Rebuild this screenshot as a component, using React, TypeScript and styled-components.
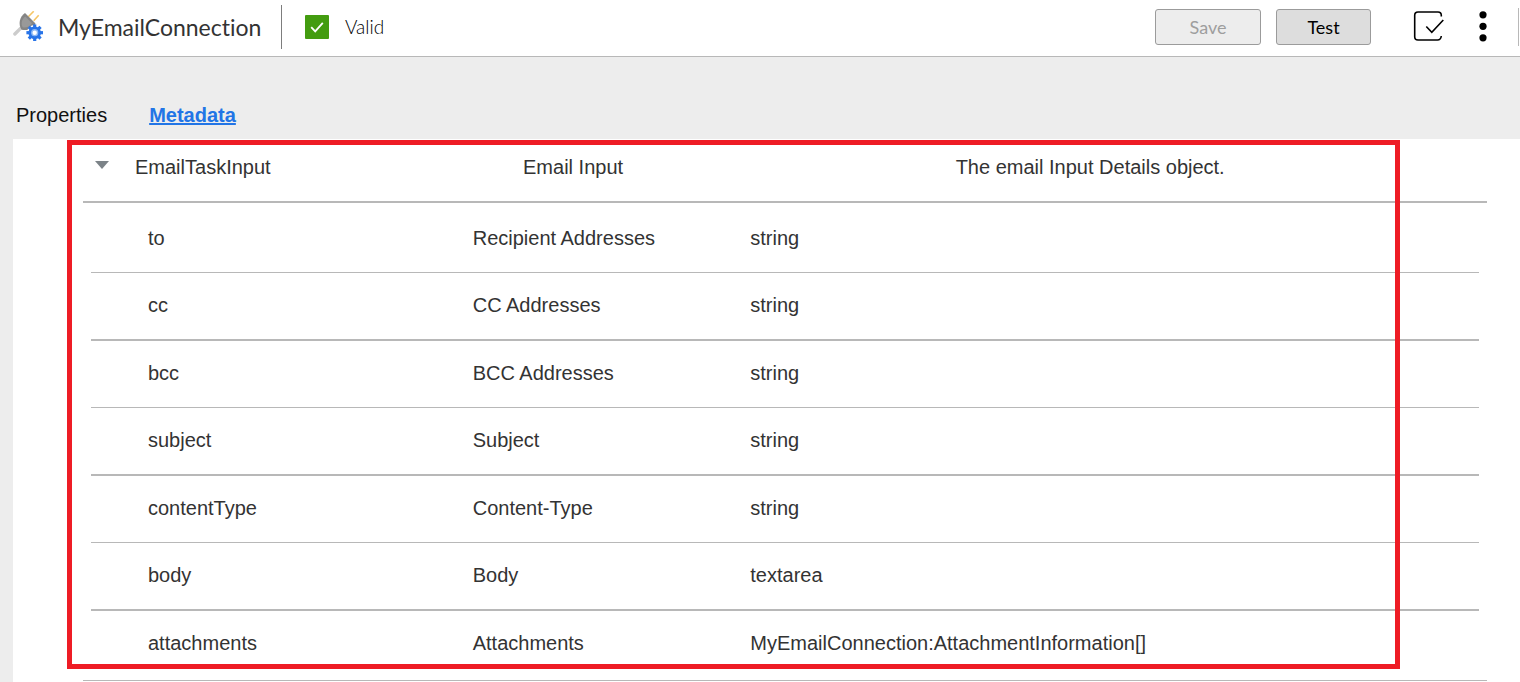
import React, { useState } from "react";
import styled, { createGlobalStyle } from "styled-components";

const GlobalStyle = createGlobalStyle`
  *, *::before, *::after { box-sizing: border-box; }
  body {
    margin: 0;
    background: #ededed;
    color: #333333;
    font-family: "Liberation Sans", Arial, sans-serif;
    font-size: 20px;
    line-height: 26px;
  }
`;

const Page = styled.div`
  display: flex;
  flex-direction: column;
  min-height: 100vh;
`;

const Header = styled.header`
  display: flex;
  align-items: center;
  height: 57px;
  padding: 0 1px 3px 13px;
  background: #ffffff;
  border-bottom: 1px solid #b8b8b8;
  font-family: Lato, "Liberation Sans", sans-serif;
  font-variant-ligatures: none;
`;

const Title = styled.h1`
  margin: 0 0 0 14px;
  font-size: 23px;
  line-height: 28px;
  font-weight: 400;
`;

const Divider = styled.span<{ $height: number; $color: string }>`
  width: 1px;
  height: ${(p) => p.$height}px;
  background: ${(p) => p.$color};
`;

const Status = styled.div`
  display: flex;
  align-items: center;
  gap: 16px;
  margin-left: 23px;
  font-size: 19px;
  font-weight: 300;
  color: #000000;
`;

const TitleGroup = styled.div`
  display: flex;
  align-items: center;
  min-width: 268px;
`;

const Actions = styled.div`
  display: flex;
  align-items: center;
  gap: 15px;
  margin-left: auto;
`;

const ActionButton = styled.button<{ $width: number }>`
  width: ${(p) => p.$width}px;
  height: 36px;
  padding: 0;
  border: 1px solid #9b9b9b;
  border-radius: 3px;
  background: #dddddd;
  color: #000000;
  font: inherit;
  font-size: 18px;
  &:disabled {
    background: #ededed;
    color: #9e9e9e;
  }
`;

const IconButton = styled.button`
  display: flex;
  align-items: center;
  justify-content: center;
  width: 32px;
  height: 36px;
  padding: 0;
  border: 0;
  background: none;
  color: #000000;
`;

const IconGroup = styled.div`
  display: flex;
  align-items: center;
  gap: 22px;
  margin: 0 4px 0 27px;
`;

const Tabs = styled.nav`
  display: flex;
  gap: 42px;
  padding: 45px 16px 11px;
`;

const Tab = styled.a<{ $active?: boolean }>`
  color: ${(p) => (p.$active ? "#2275e6" : "#111111")};
  font-weight: ${(p) => (p.$active ? 700 : 400)};
  text-decoration: ${(p) => (p.$active ? "underline" : "none")};
`;

const Panel = styled.main`
  flex: 1;
  margin-left: 13px;
  background: #ffffff;
`;

const MetadataObject = styled.section`
  position: relative;
  padding: 0 33px 0 70px;
`;

const Highlight = styled.div`
  position: absolute;
  inset: 1px 120px 12px 54px;
  border: 5px solid #ee1c25;
  pointer-events: none;
`;

const ObjectRow = styled.div`
  display: grid;
  grid-template-columns: 52px 287fr 320fr 393fr;
  padding: 15px 0 21px;
  border-bottom: 2px solid #b8b8b8;
`;

const Toggle = styled.button<{ $open: boolean }>`
  display: flex;
  align-items: center;
  width: 38px;
  height: 22px;
  padding: 0 0 0 12px;
  border: 0;
  background: none;
  svg {
    transform: ${(p) => (p.$open ? "none" : "rotate(-90deg)")};
  }
`;

const FieldArea = styled.div`
  padding: 3px 8px;
  border-bottom: 1px solid #b8b8b8;
`;

const FieldTable = styled.table`
  width: 100%;
  table-layout: fixed;
  border-spacing: 0;
`;

const FieldRow = styled.tr`
  td {
    padding: 19px 0 21px;
    border-bottom: 1px solid #b8b8b8;
  }
  td:first-child {
    padding-left: 57px;
  }
  &:nth-child(even) td {
    border-bottom-width: 2px;
  }
  &:last-child td {
    border-bottom: 0;
  }
`;

const NameCol = styled.col`
  width: 27.5%;
`;

const LabelCol = styled.col`
  width: 20%;
`;

const fields = [
  ["to", "Recipient Addresses", "string"],
  ["cc", "CC Addresses", "string"],
  ["bcc", "BCC Addresses", "string"],
  ["subject", "Subject", "string"],
  ["contentType", "Content-Type", "string"],
  ["body", "Body", "textarea"],
  ["attachments", "Attachments", "MyEmailConnection:AttachmentInformation[]"],
];

const gearTeeth = [0, 45, 90, 135, 180, 225, 270, 315];

function ConnectionIcon() {
  return (
    <svg width="31" height="31" viewBox="0 0 31 31" aria-hidden="true">
      <path d="M1.9 23 8.5 16.4" stroke="#cccccc" strokeWidth="3.4" strokeLinecap="round" />
      <path d="M15.3 5.7 20.7 .3M20.7 9.7 25.7 4.3" stroke="#f5c565" strokeWidth="1.6" />
      <path d="M12 2 22.5 12.5C20.5 17.5 15 20 8.5 18.8 4.8 13 6.8 5.5 12 2Z" fill="#858585" />
      <path d="M12.3 5.5 19 12.2C16.5 15.8 13 17 9.6 16.2 7.6 12.2 9 8 12.3 5.5Z" fill="#999999" />
      <circle cx="21.7" cy="21.7" r="7.6" fill="#ffffff" />
      <g fill="#2874e8">
        {gearTeeth.map((angle) => (
          <rect
            key={angle}
            x="20.1"
            y="13.4"
            width="3.2"
            height="4"
            transform={`rotate(${angle} 21.7 21.7)`}
          />
        ))}
        <circle cx="21.7" cy="21.7" r="6.3" />
      </g>
      <circle cx="21.7" cy="21.7" r="2.9" fill="#ffffff" stroke="#8db8f5" strokeWidth="1.4" />
    </svg>
  );
}

function ValidIcon() {
  return (
    <svg width="24" height="24" viewBox="0 0 24 24" aria-hidden="true">
      <rect width="24" height="24" rx="1" fill="#439c10" />
      <path d="m6.2 12.2 4 4.2 7.6-8.6" fill="none" stroke="#ffffff" strokeWidth="1.8" />
    </svg>
  );
}

function ValidateIcon() {
  return (
    <svg width="32" height="32" viewBox="0 0 32 32" fill="none" stroke="currentColor" aria-hidden="true">
      <path
        d="M28.3 5.5V4.3Q28.3 1 25 1H5Q1.7 1 1.7 4.3v21.4Q1.7 29 5 29h19.5q3.3 0 3.8-4"
        strokeWidth="1.6"
      />
      <path d="m13.3 15.5 5.5 5.8L30.3 9" strokeWidth="1.6" />
    </svg>
  );
}

function MoreIcon() {
  return (
    <svg width="8" height="32" viewBox="0 0 8 32" aria-hidden="true">
      <circle cx="4" cy="3.8" r="3.6" />
      <circle cx="4" cy="15.3" r="3.6" />
      <circle cx="4" cy="26.8" r="3.6" />
    </svg>
  );
}

export default function App() {
  const [open, setOpen] = useState(true);
  return (
    <Page>
      <GlobalStyle />
      <Header>
        <TitleGroup>
          <ConnectionIcon />
          <Title>MyEmailConnection</Title>
        </TitleGroup>
        <Divider $height={44} $color="#7d7d7d" />
        <Status>
          <ValidIcon />
          <span>Valid</span>
        </Status>
        <Actions>
          <ActionButton $width={106} disabled>Save</ActionButton>
          <ActionButton $width={95}>Test</ActionButton>
          <IconGroup>
            <IconButton aria-label="Validate"><ValidateIcon /></IconButton>
            <IconButton aria-label="More actions"><MoreIcon /></IconButton>
          </IconGroup>
          <Divider $height={38} $color="#b8b8b8" />
        </Actions>
      </Header>
      <Tabs>
        <Tab href="#properties">Properties</Tab>
        <Tab href="#metadata" $active aria-current="page">Metadata</Tab>
      </Tabs>
      <Panel>
        <MetadataObject>
          <ObjectRow>
            <Toggle
              $open={open}
              aria-expanded={open}
              aria-label="Toggle EmailTaskInput"
              onClick={() => setOpen(!open)}
            >
              <svg width="14" height="8" viewBox="0 0 14 8" aria-hidden="true">
                <path d="M0 0h14L7 8Z" fill="#7c8388" />
              </svg>
            </Toggle>
            <span>EmailTaskInput</span>
            <span>Email Input</span>
            <span>The email Input Details object.</span>
          </ObjectRow>
          {open && (
            <FieldArea>
              <FieldTable>
                <colgroup>
                  <NameCol />
                  <LabelCol />
                  <col />
                </colgroup>
                <tbody>
                  {fields.map(([name, label, type]) => (
                    <FieldRow key={name}>
                      <td>{name}</td>
                      <td>{label}</td>
                      <td>{type}</td>
                    </FieldRow>
                  ))}
                </tbody>
              </FieldTable>
            </FieldArea>
          )}
          <Highlight />
        </MetadataObject>
      </Panel>
    </Page>
  );
}
